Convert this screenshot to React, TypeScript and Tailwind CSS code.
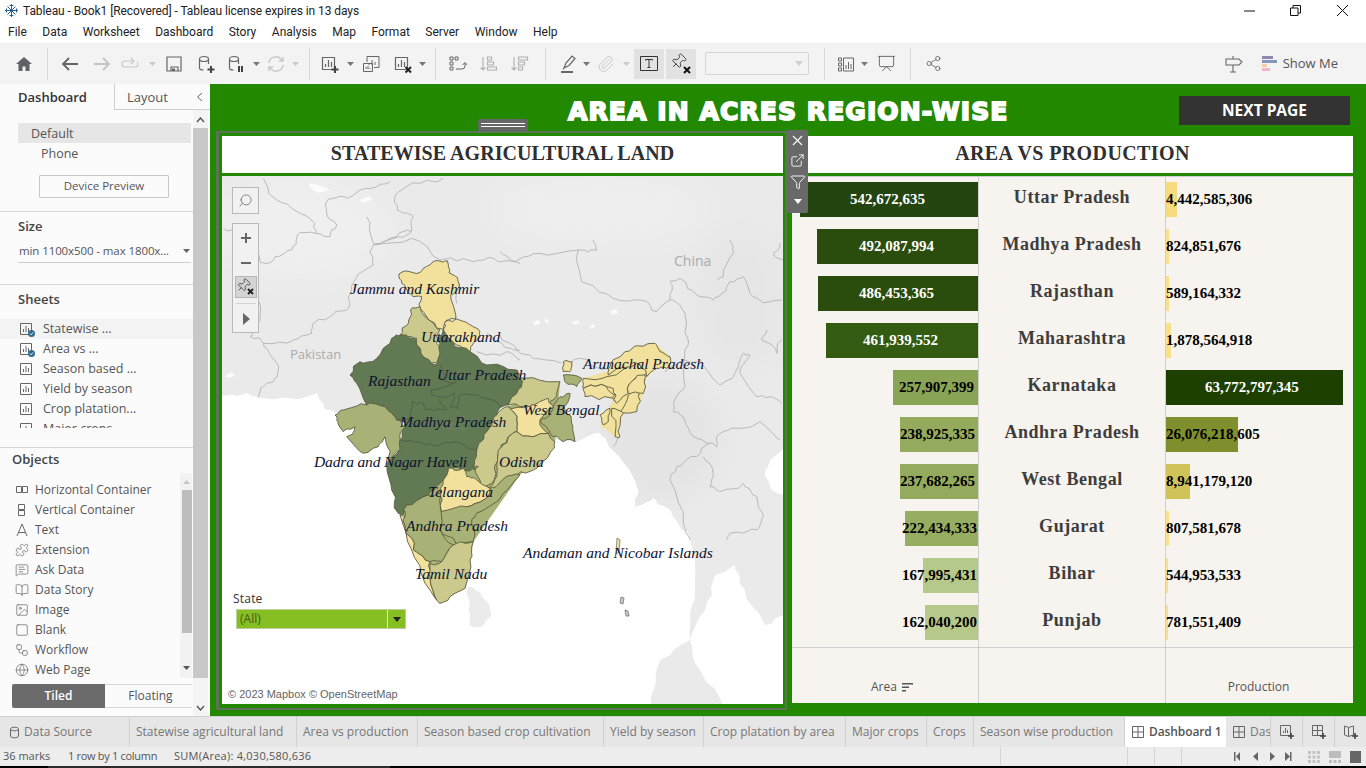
import type { ReactNode } from "react";
import {
  BookOpen,
  ExternalLink,
  Filter,
  Globe,
  Image,
  MessageSquareText,
  Paperclip,
  Pin,
  Presentation,
  Puzzle,
  Search,
  Share2,
  Square,
  Workflow,
  X,
} from "lucide-react";

// map helpers: zoom crops were read at 3x, so convert them back to screen pixels
const z = (ox: number, oy: number, s: string) =>
  s
    .trim()
    .split(/\s+/)
    .map((pair) => {
      const [a, b] = pair.split(",").map(Number);
      return `${(ox + a / 3).toFixed(1)},${(oy + b / 3).toFixed(1)}`;
    })
    .join(" ");
const z6 = (s: string) => z(220, 170, s);
const z7 = (s: string) => z(300, 250, s);
const z8 = (s: string) => z(500, 240, s);

// borders on the map are wiggly, subdivide the edges with a stable offset
const hash = (x: number, y: number) => {
  const s = Math.sin(x * 12.9898 + y * 78.233) * 43758.5453;
  return s - Math.floor(s);
};
const rough = (s: string, closed = false) => {
  let pts = s
    .trim()
    .split(/\s+/)
    .map((p) => p.split(",").map(Number));
  for (let round = 0; round < 2; round++) {
    const next: number[][] = [];
    pts.forEach((a, i) => {
      next.push(a);
      const b = pts[i + 1] ?? (closed ? pts[0] : null);
      if (!b) return;
      const mx = (a[0] + b[0]) / 2;
      const my = (a[1] + b[1]) / 2;
      const amp = Math.min(Math.hypot(a[0] - b[0], a[1] - b[1]) * 0.2, 2.6);
      next.push([mx + (hash(mx, my) - 0.5) * amp * 2, my + (hash(my, mx) - 0.5) * amp * 2]);
    });
    pts = next;
  }
  return pts.map((p) => `${p[0].toFixed(1)},${p[1].toFixed(1)}`).join(" ");
};

const DARK = "#617a53";
const MID = "#a8b277";
const KHAKI = "#cbc98c";
const PALE = "#f1e19d";

const states: [string, string][] = [
  [PALE, z7("297,72 340,68 370,55 415,32 442,32 447,68 472,82 478,108 462,130 452,135 468,205 440,210 430,240 410,235 360,175 365,140 325,130 305,100")],
  [PALE, z7("435,215 470,207 530,235 540,260 520,280 510,305 470,285 430,250 430,240")],
  [KHAKI, z7("335,175 360,170 410,235 420,240 410,280 420,340 395,340 370,320 350,265 325,260 300,255 325,220")],
  [DARK, z7("300,255 345,265 375,325 410,345 418,300 410,270 430,240 465,290 510,305 560,345 650,360 668,395 650,430 625,465 605,470 590,495 560,545 530,600 520,650 535,660 490,660 450,660 420,700 385,735 320,765 310,795 295,790 275,720 260,640 300,600 300,570 315,520 290,510 255,470 200,465 170,400 150,375 180,335 230,325 275,265")],
  [MID, z7("105,495 130,480 200,465 255,470 290,510 315,530 300,570 300,600 265,625 255,560 235,590 190,610 140,560 165,530 130,545 110,510")],
  [KHAKI, z7("650,360 670,385 780,395 770,440 750,460 700,465 680,470 625,465 650,430 668,395")],
  [PALE, z7("625,470 680,470 700,465 745,445 760,470 720,510 745,550 700,560 650,545 650,510")],
  [MID, z7("745,500 780,440 810,430 790,470 815,520 825,575 790,575 750,550 720,510")],
  [MID, z7("790,375 845,385 830,410 795,395")],
  [PALE, z7("790,335 815,335 810,365 790,365")],
  [KHAKI, z7("590,495 625,470 650,510 650,545 625,560 600,600 595,630 585,680 555,710 525,660 535,650 520,650 530,600 560,545")],
  [KHAKI, z7("650,545 700,560 745,550 765,575 750,610 700,660 640,675 600,710 560,715 590,680 595,600 625,560")],
  [PALE, z7("445,655 490,655 500,680 530,690 570,715 550,750 500,770 425,785 420,720 430,690")],
  [MID, z7("570,715 640,675 660,675 610,730 530,790 515,810 520,875 470,885 420,840 420,785 500,770 550,750")],
  [MID, z7("320,765 385,735 425,720 420,840 460,885 425,935 390,935 340,900 315,835 315,800")],
  [PALE, z7("300,795 315,800 315,835 340,900 390,935 390,980 410,1050 375,1000 335,900")],
  [KHAKI, z7("460,885 520,875 510,930 495,1015 450,1040 420,1060 410,1050 390,980 390,940 425,935")],
  [PALE, z8("250,415 320,410 410,370 440,380 440,400 400,420 385,460 350,490 340,480 348,465 320,440 250,445")],
  [PALE, z8("325,405 330,380 350,355 405,318 465,310 480,335 510,350 500,385 470,385 440,410 410,370")],
  [PALE, z8("250,445 320,440 345,465 340,475 255,470")],
  [PALE, z8("400,420 435,405 430,460 385,460")],
  [PALE, z8("385,465 418,460 410,515 360,515")],
  [PALE, z8("335,505 370,520 360,590 345,590")],
  [PALE, z8("300,525 330,505 325,545 310,555")],
];

const innerBorders = [
  z7("420,345 430,390 470,395 390,420 395,435 440,440 465,430 450,470 475,475 475,440 520,435 580,450 605,470"),
  z7("290,510 330,500 335,455 370,460 375,480 440,480 420,445"),
  z7("300,570 340,575 400,585 470,575 530,600"),
];

const countryLines = [
  z6("10,175 35,180 70,210 100,215 120,275 135,280 165,260 215,240 232,195 285,190 330,200 350,165 320,130 320,95 345,85 380,85 420,60 470,50 510,35"),
  z6("130,25 145,70 215,115 285,160 290,190"),
  z6("440,140 460,220 490,215 570,190 580,140 550,130 525,100 530,70 600,40 670,25"),
  z6("575,185 510,205 460,225 450,250 460,285 405,330 385,385 380,420 330,440 280,460 275,490 220,510 130,520 90,500 120,450 100,300"),
  z6("130,520 155,560 175,600 160,635 130,650 115,680"),
  z6("460,225 575,205 660,270 760,275 820,265 900,280"),
  z6("660,270 720,345 710,400"),
  z6("770,545 860,545 900,570"),
  z6("800,490 845,520 900,540"),
  z8("0,285 40,315 60,340 100,355 185,370"),
  z8("215,370 240,355 325,385"),
  z8("0,35 45,65 120,40 235,30 290,30 280,0"),
  z8("235,30 245,125 340,175 420,180 470,215 510,180"),
  z8("510,180 510,125 540,115 590,165 640,180 660,165 690,125 730,110 760,170 780,180 845,180"),
  z8("690,0 700,40 670,110 650,120"),
  z8("840,10 820,40 850,60"),
  z8("510,180 545,205 565,300 555,330 555,440 520,490 520,515 550,530 580,590 630,610 650,620 660,580 720,565 780,545 840,600"),
  z8("630,610 590,650 530,680 510,720 550,850 570,900"),
  z8("610,650 640,700 630,740 660,755 730,730 770,770 790,830 770,870 690,880 680,900"),
  z8("495,395 555,360 600,360 660,435 700,410 730,340 750,345 720,400 770,470 810,470 845,490"),
  z8("800,270 785,300 830,340 845,300"),
  z8("340,620 355,590"),
];

const mapLabels = [
  { text: "Jammu and Kashmir", cls: "left-[128px] top-[104px]" },
  { text: "Uttarakhand", cls: "left-[199px] top-[152px]" },
  { text: "Arunachal Pradesh", cls: "left-[361px] top-[179px]" },
  { text: "Uttar Pradesh", cls: "left-[215px] top-[190px]" },
  { text: "Rajasthan", cls: "left-[146px] top-[196px]" },
  { text: "West Bengal", cls: "left-[301px] top-[225px]" },
  { text: "Madhya Pradesh", cls: "left-[178px] top-[237px]" },
  { text: "Dadra and Nagar Haveli", cls: "left-[92px] top-[277px] tracking-[-0.15px]" },
  { text: "Odisha", cls: "left-[277px] top-[277px]" },
  { text: "Telangana", cls: "left-[206px] top-[307px]" },
  { text: "Andhra Pradesh", cls: "left-[184px] top-[341px]" },
  { text: "Andaman and Nicobar Islands", cls: "left-[301px] top-[368px]" },
  { text: "Tamil Nadu", cls: "left-[193px] top-[389px]" },
];

const rows = [
  { name: "Uttar Pradesh", area: "542,672,635", areaW: 178, areaBg: "#24450f", areaPr: 53, light: true, prod: "4,442,585,306", prodW: 11, prodBg: "#f6dc7f", prodPl: 0 },
  { name: "Madhya Pradesh", area: "492,087,994", areaW: 161, areaBg: "#2a4c0c", areaPr: 44, light: true, prod: "824,851,676", prodW: 3, prodBg: "#f8e08c", prodPl: 0 },
  { name: "Rajasthan", area: "486,453,365", areaW: 160, areaBg: "#2a4c0c", areaPr: 44, light: true, prod: "589,164,332", prodW: 3, prodBg: "#f8e08c", prodPl: 0 },
  { name: "Maharashtra", area: "461,939,552", areaW: 152, areaBg: "#335b11", areaPr: 40, light: true, prod: "1,878,564,918", prodW: 5, prodBg: "#f8e08c", prodPl: 0 },
  { name: "Karnataka", area: "257,907,399", areaW: 85, areaBg: "#8aa455", areaPr: 4, light: false, prod: "63,772,797,345", prodW: 177, prodBg: "#1d3f00", prodPl: 39 },
  { name: "Andhra Pradesh", area: "238,925,335", areaW: 78, areaBg: "#94ab5e", areaPr: 3, light: false, prod: "26,076,218,605", prodW: 72, prodBg: "#808f2e", prodPl: 0 },
  { name: "West Bengal", area: "237,682,265", areaW: 78, areaBg: "#94ab5e", areaPr: 3, light: false, prod: "8,941,179,120", prodW: 24, prodBg: "#cfc35a", prodPl: 0 },
  { name: "Gujarat", area: "222,434,333", areaW: 73, areaBg: "#96ae62", areaPr: 1, light: false, prod: "807,581,678", prodW: 3, prodBg: "#f8e08c", prodPl: 0 },
  { name: "Bihar", area: "167,995,431", areaW: 55, areaBg: "#b5c98a", areaPr: 1, light: false, prod: "544,953,533", prodW: 2, prodBg: "#f8e08c", prodPl: 0 },
  { name: "Punjab", area: "162,040,200", areaW: 53, areaBg: "#b6c98a", areaPr: 1, light: false, prod: "781,551,409", prodW: 2, prodBg: "#f8e08c", prodPl: 0 },
];

const menus = ["File", "Data", "Worksheet", "Dashboard", "Story", "Analysis", "Map", "Format", "Server", "Window", "Help"];
const sheets = ["Statewise ...", "Area vs ...", "Season based ...", "Yield by season", "Crop platation...", "Major crops"];

const sheetTabs = [
  { label: "Statewise agricultural land", cls: "w-[167px]" },
  { label: "Area vs production", cls: "w-[121px]" },
  { label: "Season based crop cultivation", cls: "w-[186px]" },
  { label: "Yield by season", cls: "w-[100px]" },
  { label: "Crop platation by area", cls: "w-[142px]" },
  { label: "Major crops", cls: "w-[81px]" },
  { label: "Crops", cls: "w-[47px]" },
  { label: "Season wise production", cls: "w-[151px]" },
];

const Tool = ({ className, children }: { className: string; children?: ReactNode }) => (
  <div className={`flex items-center justify-center shrink-0 h-full ${className}`}>{children}</div>
);
const Sep = () => <div className="w-px h-[32px] bg-[#d9d9d9] shrink-0" />;
const Caret = ({ light }: { light?: boolean }) => (
  <Tool className="w-[8px]">
    <svg width="7" height="4" viewBox="0 0 7 4">
      <path d="M0 0h7L3.5 4z" fill={light ? "#c8c8c8" : "#777"} />
    </svg>
  </Tool>
);
const Ico = ({ children, size = 20 }: { children: ReactNode; size?: number }) => (
  <svg width={size} height={size} viewBox="0 0 20 20" fill="none" stroke="#666" strokeWidth="1.2">
    {children}
  </svg>
);
const Cylinder = () => <path d="M3.5 5c0-1.4 2-2.5 4.5-2.5s4.500 1.100 4.500 2.500v5M3.500 5c0 1.400 2 2.500 4.500 2.500s4.500-1.100 4.500-2.500M3.500 5v9c0 1 1.500 2 4 2" />;
const Chart = () => <path d="M2.500 3.500h12v12h-12zM5.500 13v-3M8.500 13V6M11.500 13V8" />;
const PlusMark = () => <path d="M15 12v7M11.500 15.500h7" stroke="#444" strokeWidth="2" />;
const XMark = () => <path d="M12.500 13l5.500 5.500M18 13l-5.500 5.500" stroke="#222" strokeWidth="2" />;

const SheetIcon = ({ checked }: { checked?: boolean }) => (
  <span className="relative w-[15px] h-[15px] shrink-0 block">
    <svg width="14" height="14" viewBox="0 0 14 14" fill="none" stroke="#666" strokeWidth="1">
      <path d="M1.500 1.500h11v11h-11zM4.500 10V7M7 10V4M9.500 10V6" />
    </svg>
    {checked && (
      <svg className="absolute left-[9px] top-[8px]" width="7" height="7" viewBox="0 0 7 7">
        <circle cx="3.500" cy="3.500" r="3.500" fill="#2f6a8f" />
        <path d="M1.800 3.600l1.200 1.200 2.200-2.400" stroke="white" strokeWidth="0.9" fill="none" />
      </svg>
    )}
  </span>
);

const objectIcons: [string, ReactNode][] = [
  ["Horizontal Container", <svg width="14" height="14" viewBox="0 0 14 14" fill="none" stroke="#666"><path d="M1.500 3.500h5v6h-5zM7.500 3.500h5v6h-5z" /></svg>],
  ["Vertical Container", <svg width="14" height="14" viewBox="0 0 14 14" fill="none" stroke="#666"><path d="M3.500 1.500h6v5h-6zM3.500 7.500h6v5h-6z" /></svg>],
  ["Text", <svg width="14" height="14" viewBox="0 0 14 14" fill="none" stroke="#666"><path d="M2 13L7 1l5 12M3.500 9.500h7" /></svg>],
  ["Extension", <Puzzle size={14} color="#666" strokeWidth={1.2} />],
  ["Ask Data", <MessageSquareText size={14} color="#666" strokeWidth={1.2} />],
  ["Data Story", <BookOpen size={14} color="#666" strokeWidth={1.2} />],
  ["Image", <Image size={14} color="#666" strokeWidth={1.2} />],
  ["Blank", <Square size={14} color="#666" strokeWidth={1.2} />],
  ["Workflow", <Workflow size={14} color="#666" strokeWidth={1.2} />],
  ["Web Page", <Globe size={14} color="#666" strokeWidth={1.2} />],
];

const Sidebar = () => (
  <aside className="w-[210px] shrink-0 flex flex-col bg-[#fbfbfb] text-[#555] text-[12.5px]">
    <div className="h-[26px] flex shrink-0">
      <div className="w-[114px] pl-[18px] pt-[4px] text-[13px] font-semibold text-[#333]">Dashboard</div>
      <div className="flex-1 flex border-l border-b border-[#cfcfcf] pt-[4px] text-[13px] text-[#555]">
        <span className="pl-[12px]">Layout</span>
        <svg className="ml-[28px] mt-[4px]" width="7" height="10" viewBox="0 0 7 10" fill="none" stroke="#666"><path d="M6 1L1.500 5 6 9" /></svg>
      </div>
    </div>
    <div className="flex h-[606px]">
      <div className="w-[193px] shrink-0 flex flex-col pt-[13px]">
        <div className="ml-[18px] w-[173px] h-[20px] bg-[#e6e6e6] pl-[13px] leading-[22px]">Default</div>
        <div className="h-[20px] pl-[41px] leading-[22px]">Phone</div>
        <div className="mt-[12px] ml-[39px] w-[130px] h-[23px] border border-[#c8c8c8] rounded-[1px] text-center leading-[19px] text-[11.5px]">Device Preview</div>
        <div className="mt-[13px] border-t border-[#d5d5d5] h-[29px] pl-[18px] leading-[28px] font-semibold text-[#444] text-[13px]">Size</div>
        <div className="ml-[18px] w-[173px] h-[23px] border-b border-[#cfcfcf] flex items-center text-[11.5px] tracking-[-0.1px]">
          <span className="pl-px whitespace-nowrap">min 1100x500 - max 1800x...</span>
          <svg className="ml-auto mr-[1px]" width="7" height="4" viewBox="0 0 7 4"><path d="M0 0h7L3.500 4z" fill="#666" /></svg>
        </div>
        <div className="mt-[21px] border-t border-[#d5d5d5] h-[28px] pl-[18px] leading-[28px] font-semibold text-[#444] text-[13px]">Sheets</div>
        <div className="mt-[7px] h-[109px] overflow-hidden">
          {sheets.map((s, i) => (
            <div key={s} className={i === 0 ? "h-[20px] flex items-center pl-[19px] gap-[9px] bg-[#f3f3f3]" : "h-[20px] flex items-center pl-[19px] gap-[9px]"}>
              <SheetIcon checked={i < 2} />
              <span className="whitespace-nowrap">{s}</span>
            </div>
          ))}
        </div>
        <div className="mt-[19px] border-t border-[#d5d5d5] h-[24px] pl-[12px] leading-[22px] font-semibold text-[#444] text-[13px]">Objects</div>
        <div className="flex h-[207px]">
          <div className="w-[180px] pt-[9px]">
            {objectIcons.map(([label, icon]) => (
              <div key={label} className="h-[20px] flex items-center pl-[14px] gap-[6px]">
                <span className="w-[15px] flex justify-center shrink-0">{icon}</span>
                <span className="whitespace-nowrap text-[12px]">{label}</span>
              </div>
            ))}
          </div>
          <div className="mt-[2px] w-[12px] bg-[#f2f2f2] flex flex-col items-center">
            <svg className="mt-[7px] mb-[6px]" width="7" height="4" viewBox="0 0 7 4"><path d="M0 4h7L3.500 0z" fill="#c4c4c4" /></svg>
            <div className="w-[10px] ml-[2px] h-[143px] bg-[#bdbdbd]" />
            <svg className="mt-[33px]" width="7" height="4" viewBox="0 0 7 4"><path d="M0 0h7L3.500 4z" fill="#555" /></svg>
          </div>
        </div>
        <div className="mt-[6px] ml-[12px] h-[24px] flex text-[12px]">
          <div className="w-[93px] bg-[#6b6b6b] text-white font-semibold text-center leading-[24px] rounded-l-[2px]">Tiled</div>
          <div className="w-[87px] border-y border-[#d5d5d5] text-center leading-[22px] pl-[4px]">Floating</div>
        </div>
      </div>
      <div className="w-[15px] flex flex-col items-center bg-[#f4f4f4]">
        <svg className="mt-[7px]" width="9" height="6" viewBox="0 0 9 6" fill="none" stroke="#555" strokeWidth="1.400"><path d="M1 5l3.500-4L8 5" /></svg>
        <div className="mt-[5px] w-[15px] h-[550px] bg-[#c8c8c8]" />
        <svg className="mt-[27px]" width="9" height="6" viewBox="0 0 9 6" fill="none" stroke="#555" strokeWidth="1.400"><path d="M1 1l3.500 4L8 1" /></svg>
      </div>
    </div>
  </aside>
);

const MapPanel = () => (
  <div className="relative w-[561px] h-[528px] bg-white overflow-hidden">
    <svg className="absolute inset-0" width="561" height="528" viewBox="222 176 561 528">
      <defs>
        <filter id="soft" x="-30%" y="-30%" width="160%" height="160%">
          <feGaussianBlur stdDeviation="14" />
        </filter>
        <clipPath id="land">
          <polygon points={rough("215,170 790,170 790,448 770,460 765,475 772,490 790,500 790,610 765,625 745,590 735,565 715,575 705,610 690,640 700,670 725,710 650,710 660,660 690,640 695,580 690,540 680,527 667,508 653,498 635,507 637,487 627,467 610,448 600,433 575,442 335,413 327,410 317,393 307,397 262,398 247,393 215,392", true)} />
        </clipPath>
      </defs>
      <g clipPath="url(#land)">
        <rect x="215" y="170" width="575" height="540" fill="#eaeaea" />
        <ellipse cx="300" cy="230" rx="90" ry="50" fill="#efefef" filter="url(#soft)" />
        <ellipse cx="600" cy="210" rx="110" ry="35" fill="#eeeeee" filter="url(#soft)" />
        <ellipse cx="660" cy="440" rx="60" ry="60" fill="#e4e4e4" filter="url(#soft)" />
        <ellipse cx="740" cy="300" rx="45" ry="70" fill="#e6e6e6" filter="url(#soft)" />
      </g>
      <polygon fill="#ebebeb" points={rough(z(220, 570, "745,50 780,65 810,110 810,140 780,172 750,165 745,120"), true)} />
      {["610,311 616,309 618,313 612,315", "572,322 578,320 580,323 574,325", "533,322 538,320 541,323 535,326", "590,326 594,324 595,327 591,329", "545,320 547,318 549,322 546,323", "308,183 322,186 330,190 318,193 310,188", "360,200 370,196 372,200 362,203", "225,376 232,372 235,376 228,378"].map((p) => (
        <polygon key={p} points={p} fill="#fbfbfb" />
      ))}
      {countryLines.map((p) => (
        <polyline key={p} points={rough(p)} fill="none" stroke="#b0b0b0" strokeWidth="0.85" />
      ))}
      {/* silhouettes so no gaps show between the state shapes */}
      <polygon fill={MID} points={z7("300,600 520,650 625,470 780,395 765,575 660,675 520,875 495,1015 415,1055 310,795")} />
      <polygon fill={PALE} points={z8("250,415 410,370 465,310 510,350 440,410 430,460 410,515 370,520 345,590 300,555 340,480 250,445")} />
      {states.map(([fill, pts]) => (
        <polygon key={pts} points={rough(pts, true)} fill={fill} stroke="#5c5c40" strokeWidth="0.9" strokeLinejoin="round" />
      ))}
      {innerBorders.map((p) => (
        <polyline key={p} points={rough(p)} fill="none" stroke="#4d5f45" strokeWidth="0.9" />
      ))}
      <polygon points="617,538 620,540 619,552 616,554" fill={PALE} stroke="#666" strokeWidth="0.7" />
      <polygon points="621,597 624,598 623,604 620,603" fill="#cccccc" stroke="#666" strokeWidth="0.7" />
      <polygon points="625,610 628,611 629,616 626,616" fill="#cccccc" stroke="#666" strokeWidth="0.7" />
    </svg>

    <span className="absolute left-[68px] top-[169px] text-[13px] text-[#ababab] font-['Open_Sans',sans-serif]">Pakistan</span>
    <span className="absolute left-[452px] top-[74px] text-[14px] text-[#ababab] font-['Open_Sans',sans-serif]">China</span>
    <span className="absolute left-[216px] top-[240px] text-[13px] text-[#6d8060] font-['Open_Sans',sans-serif]">India</span>

    {mapLabels.map((l) => (
      <span key={l.text} className={`absolute ${l.cls} whitespace-nowrap leading-[18px] text-[15.5px] italic text-[#0d1230] font-['Liberation_Serif',serif]`}>
        {l.text}
      </span>
    ))}

    <div className="absolute left-[10px] top-[11px] w-[27px] h-[27px] bg-[#f1f1f1] border border-[#b9b9b9] flex items-center justify-center">
      <Search size={15} color="#666" strokeWidth={1.2} className="-scale-x-100" />
    </div>
    <div className="absolute left-[10px] top-[47px] w-[27px] h-[110px] bg-[#f1f1f1] border border-[#b9b9b9] flex flex-col items-center">
      <svg className="mt-[8px]" width="12" height="12" viewBox="0 0 12 12" fill="none" stroke="#666" strokeWidth="2"><path d="M6 1v10M1 6h10" /></svg>
      <svg className="mt-[13px]" width="12" height="12" viewBox="0 0 12 12" fill="none" stroke="#666" strokeWidth="2"><path d="M1 6h10" /></svg>
      <div className="relative mt-[7px] w-[22px] h-[22px] bg-[#d4d4d4] border border-[#b5b5b5] flex items-center justify-center">
        <Pin size={15} color="#333" strokeWidth={1.2} className="rotate-45 -translate-x-[2px] -translate-y-[2px]" />
        <svg className="absolute right-[2px] bottom-[2px]" width="7" height="7" viewBox="0 0 7 7" stroke="#222" strokeWidth="1.800"><path d="M1 1l5 5M6 1L1 6" /></svg>
      </div>
      <div className="mt-[5px] w-[20px] border-t border-[#d4d4d4]" />
      <svg className="mt-[9px]" width="8" height="12" viewBox="0 0 8 12"><path d="M1 0l7 6-7 6z" fill="#666" /></svg>
    </div>

    <div className="absolute left-[11px] top-[414px] text-[12px] text-[#333] font-['Open_Sans',sans-serif] tracking-[0.2px]">State</div>
    <div className="absolute left-[14px] top-[433px] w-[170px] h-[20px] bg-[#85bf21] border border-[#bdcf9f] flex items-center text-[12px] text-[#46591f] font-['Open_Sans',sans-serif]">
      <span className="pl-[3px] flex-1">(All)</span>
      <span className="w-[18px] h-full border-l border-[#e3eccf] flex items-center justify-center">
        <svg width="8" height="5" viewBox="0 0 8 5"><path d="M0 0h8L4 5z" fill="#222" /></svg>
      </span>
    </div>
    <div className="absolute left-[3px] bottom-[2px] px-[3px] bg-[#ffffffcc] text-[#666] text-[11px] leading-[16px] font-['Liberation_Sans',sans-serif] whitespace-nowrap">
      © 2023 Mapbox © OpenStreetMap
    </div>
  </div>
);

const ChartPanel = () => (
  <div className="ml-[5px] mt-[5px] w-[561px] h-[567px] flex flex-col bg-white shrink-0">
    <div className="h-[37px] flex items-center justify-center pb-[3px] font-['Liberation_Serif',serif] font-bold text-[20px] text-[#2f2f2f] tracking-[0.4px]">AREA VS PRODUCTION</div>
    <div className="h-[3px] bg-[#218800]" />
    <div className="flex-1 flex flex-col bg-[#f7f3ee] border-t border-[#cfcfcf] font-['Liberation_Serif',serif]">
      {rows.map((r) => (
        <div key={r.name} className="flex h-[47px]">
          <div className="w-[187px] border-r border-[#cfcfcf] flex justify-end pt-[5px]">
            <div
              className={`h-[35px] flex items-center justify-end font-bold text-[15px] whitespace-nowrap ${r.light ? "text-white" : "text-black"}`}
              style={{ width: r.areaW, paddingRight: r.areaPr, backgroundColor: r.areaBg }}
            >
              {r.area}
            </div>
          </div>
          <div className="w-[187px] border-r border-[#cfcfcf] text-center pt-[9px] font-bold text-[18px] leading-[22px] text-[#3d3d3d] tracking-[0.55px]">{r.name}</div>
          <div className="flex-1 pt-[5px]">
            <div
              className={`h-[35px] flex items-center font-bold text-[15px] whitespace-nowrap ${r.prodPl ? "text-white" : "text-black"}`}
              style={{ width: r.prodW, paddingLeft: r.prodPl, backgroundColor: r.prodBg }}
            >
              {r.prod}
            </div>
          </div>
        </div>
      ))}
      <div className="flex-1 flex border-t border-[#cfcfcf] font-['Open_Sans',sans-serif] text-[12px] text-[#555]">
        <div className="w-[187px] border-r border-[#cfcfcf] flex items-center pl-[79px] pt-[23px] gap-[5px]">
          <span>Area</span>
          <svg width="11" height="10" viewBox="0 0 11 10" fill="#555"><path d="M0 1h11v1.500H0zM0 4.500h7V6H0zM0 8h4v1.500H0z" /></svg>
        </div>
        <div className="w-[187px] border-r border-[#cfcfcf]" />
        <div className="flex-1 flex items-center justify-center pt-[23px] pr-[2px]">Production</div>
      </div>
    </div>
  </div>
);

const App = () => (
  <div className="w-[1366px] h-[768px] overflow-hidden flex flex-col bg-white font-['Open_Sans',sans-serif]">
    {/* title bar */}
    <div className="h-[21px] shrink-0 flex items-center text-[12px] text-[#222] font-['Roboto',sans-serif] tracking-[-0.08px]">
      <svg className="ml-[5px] mr-[5px]" width="13" height="13" viewBox="0 0 13 13" stroke="#2d5f8c" strokeWidth="1">
        <path d="M6.500 0v13M0 6.500h13M2.500 2.500l8 8M10.500 2.500l-8 8M4.500 1.500h4M4.500 11.500h4M1.500 4.500v4M11.500 4.500v4" />
      </svg>
      <span>Tableau - Book1 [Recovered] - Tableau license expires in 13 days</span>
      <svg className="ml-auto" width="12" height="2" viewBox="0 0 12 2"><path d="M0 1h11" stroke="#111" /></svg>
      <svg className="ml-[34px]" width="11" height="11" viewBox="0 0 11 11" fill="none" stroke="#111"><path d="M.5 3h7.500v7.500H.5zM3 3V.5h7.500V8H8" /></svg>
      <svg className="ml-[35px] mr-[17px]" width="13" height="13" viewBox="0 0 13 13" stroke="#111"><path d="M1 1l11 11M12 1L1 12" /></svg>
    </div>
    {/* menu */}
    <div className="h-[22px] shrink-0 flex items-center gap-[15.5px] pl-[8px] text-[12px] text-[#222] font-['Roboto',sans-serif]">
      {menus.map((m) => (
        <span key={m}>{m}</span>
      ))}
    </div>
    {/* toolbar */}
    <div className="h-[41px] shrink-0 bg-[#f3f3f3] flex items-center">
      <Tool className="w-[47px]"><svg width="20" height="20" viewBox="0 0 20 20"><path d="M10 3l8 7h-2.500v7h-4v-4.500h-3V17h-4v-7H2z" fill="#5f6368" /></svg></Tool>
      <Sep />
      <Tool className="w-[44px]"><Ico><path d="M18 10H3M9 4l-6 6 6 6" strokeWidth="1.800" /></Ico></Tool>
      <Tool className="w-[20px]"><svg width="20" height="20" viewBox="0 0 20 20" fill="none" stroke="#c4c4c4" strokeWidth="1.800"><path d="M2 10h15M11 4l6 6-6 6" /></svg></Tool>
      <Tool className="w-[36px]"><svg width="20" height="20" viewBox="0 0 20 20" fill="none" stroke="#c8c8c8" strokeWidth="1.100"><path d="M13 7H5a3 3 0 0 0 0 6h10a3 3 0 0 0 3-3 3 3 0 0 0-1-2.200M11 4l3 3-3 3" /></svg></Tool>
      <Caret light />
      <Tool className="w-[36px]"><Ico><path d="M3 3h14v14H3z" /><path d="M7 17v-4h7v4" /><path d="M8 14.500h3V17H8z" fill="#666" stroke="none" /></Ico></Tool>
      <Tool className="w-[28px]"><Ico><Cylinder /><PlusMark /></Ico></Tool>
      <Tool className="w-[32px]"><Ico><Cylinder /><path d="M13 12v6M16 12v6" stroke="#444" strokeWidth="2" /></Ico></Tool>
      <Caret />
      <Tool className="w-[31px]"><svg width="20" height="20" viewBox="0 0 20 20" fill="none" stroke="#c8c8c8" strokeWidth="1.400"><path d="M3 9a7 7 0 0 1 12-4l2 2M17 11a7 7 0 0 1-12 4l-2-2M17 3v4h-4M3 17v-4h4" /></svg></Tool>
      <Caret light />
      <Tool className="w-[10px]" />
      <Sep />
      <Tool className="w-[36px] pl-[4px]"><Ico><Chart /><PlusMark /></Ico></Tool>
      <Caret />
      <Tool className="w-[34px]"><Ico><path d="M6 8V2.500h12v11h-5M8 11V9M11 11V6M14 11V8M2.500 9.500h9v8h-9zM5 15v-2M7 15v-3M9 15v-1" strokeWidth="1" /></Ico></Tool>
      <Tool className="w-[30px]"><Ico><Chart /><XMark /></Ico></Tool>
      <Caret />
      <Tool className="w-[9px]" />
      <Sep />
      <Tool className="w-[41px]"><Ico><path d="M3 3h3v3H3zM8 3h3v3H8zM3 8h3v3H3zM3 13h3v3H3zM9 15h6a3 3 0 0 0 3-3V9M15.500 11l2.500-2.500 2 2.500" strokeWidth="1" /></Ico></Tool>
      <Tool className="w-[22px]"><svg width="20" height="20" viewBox="0 0 20 20" fill="none" stroke="#b0b0b0" strokeWidth="1.100"><path d="M5 3v13M2.500 13.500L5 16l2.500-2.500M9.500 3h4v3h-4zM9.500 8h6v3h-6zM9.500 13h9v3h-9z" /></svg></Tool>
      <Tool className="w-[40px]"><svg width="20" height="20" viewBox="0 0 20 20" fill="none" stroke="#b0b0b0" strokeWidth="1.100"><path d="M5 3v13M2.500 13.500L5 16l2.500-2.500M9.500 3h9v3h-9zM9.500 8h6v3h-6zM9.500 13h4v3h-4z" /></svg></Tool>
      <Tool className="w-[6px]" />
      <Sep />
      <Tool className="w-[36px] pl-[8px]"><Ico><path d="M6 14l2-5 6-7 3 2.500-6 7zM6 14l-1 1.500" /><path d="M3 18h12" strokeWidth="2" /></Ico></Tool>
      <Caret />
      <Tool className="w-[32px]"><Paperclip size={18} color="#c4c4c4" strokeWidth={1.2} /></Tool>
      <Caret light />
      <Tool className="w-[4px]" />
      <div className="w-[30px] h-[30px] bg-[#e2e2e2] shrink-0 flex items-center justify-center">
        <svg width="18" height="16" viewBox="0 0 18 16" fill="none" stroke="#333"><path d="M.5.5h17v14H.5zM5.500 4.500v-1h7v1M9 3.500v8M7.500 11.500h3" /></svg>
      </div>
      <div className="relative w-[30px] h-[30px] ml-[2px] bg-[#e2e2e2] shrink-0 flex items-center justify-center">
        <Pin size={17} color="#333" strokeWidth={1.2} className="rotate-45 -translate-x-[3px] -translate-y-[2px]" />
        <svg className="absolute right-[5px] bottom-[5px]" width="8" height="8" viewBox="0 0 8 8" stroke="#111" strokeWidth="2"><path d="M1 1l6 6M7 1L1 7" /></svg>
      </div>
      <div className="ml-[9px] w-[104px] h-[23px] border border-[#d5d5d5] rounded-[2px] bg-[#f3f3f3] flex items-center justify-end pr-[5px] shrink-0">
        <svg width="8" height="5" viewBox="0 0 8 5"><path d="M0 0h8L4 5z" fill="#d0d0d0" /></svg>
      </div>
      <Tool className="w-[15px]" />
      <Sep />
      <Tool className="w-[35px] pl-[7px]"><Ico><path d="M2.500 4h3v3h-3zM2.500 9h3v3h-3zM2.500 14h3v3h-3zM7.500 4h10v13h-10zM10 15v-4M12.500 15V8M15 15v-5" strokeWidth="1" /></Ico></Tool>
      <Caret />
      <Tool className="w-[36px]"><Presentation size={19} color="#666" strokeWidth={1.2} /></Tool>
      <Tool className="w-[6px]" />
      <Sep />
      <Tool className="w-[45px]"><Share2 size={17} color="#666" strokeWidth={1.2} /></Tool>
      <div className="ml-auto flex items-center h-full pr-[28px]">
        <svg width="20" height="20" viewBox="0 0 20 20" fill="none" stroke="#666" strokeWidth="1.100"><path d="M2 5h13l3 3-3 3H2zM9 2v3M9 11v7M6 18h6" /></svg>
        <svg className="ml-[18px]" width="15" height="16" viewBox="0 0 15 16"><path d="M0 0h11v3H0z" fill="#8f88b0" /><path d="M0 4h15v3H0z" fill="#8496be" /><path d="M0 8h5v3H0z" fill="#efcfa6" /><path d="M0 12h8v3H0z" fill="#f3b3c9" /></svg>
        <span className="ml-[6px] text-[13px] text-[#555]">Show Me</span>
      </div>
    </div>
    {/* main */}
    <div className="h-[632px] shrink-0 flex">
      <Sidebar />
      <div className="relative flex-1 bg-[#218800] flex flex-col">
        <div className="h-[47px] shrink-0 relative flex items-start">
          <div className="ml-[358px] mt-[12px] font-['DejaVu_Sans',sans-serif] font-bold text-[25px] leading-[32px] text-white whitespace-nowrap [-webkit-text-stroke:1.8px_white] tracking-[1.1px]">
            AREA IN ACRES REGION-WISE
          </div>
          <div className="ml-auto mr-[16px] mt-[12px] w-[171px] h-[29px] bg-[#333333] text-white font-bold text-[15.5px] flex items-center justify-center">
            NEXT PAGE
          </div>
        </div>
        <div className="flex-1 flex items-start pl-[6px]">
          <div className="relative w-[571px] h-[579px] shrink-0 border-y-2 border-l-[3px] border-r-2 border-[#5d7358] pl-[3px] pr-[2px] pt-[3px]">
            <div className="h-[37px] bg-white flex items-center justify-center pb-[3px] font-['Liberation_Serif',serif] font-bold text-[20px] text-[#2f2f2f] tracking-[0.05px]">STATEWISE AGRICULTURAL LAND</div>
            <div className="h-[3px]" />
            <MapPanel />
            <div className="absolute left-[259px] -top-[14px] w-[50px] h-[12px] bg-[#666] rounded-t-[2px] flex flex-col items-center justify-center gap-[2px]">
              <div className="w-[44px] h-px bg-white" />
              <div className="w-[44px] h-px bg-white" />
            </div>
          </div>
          <ChartPanel />
        </div>
        <div className="absolute left-[577px] top-[46px] w-[21px] h-[83px] bg-[#696969] rounded-[2px] flex flex-col items-center pt-[2px]">
          <X size={17} color="white" strokeWidth={1.6} />
          <ExternalLink size={15} color="white" strokeWidth={1.4} className="mt-[4px]" />
          <Filter size={16} color="white" strokeWidth={1.4} className="mt-[6px]" />
          <svg className="mt-[9px]" width="8" height="5" viewBox="0 0 8 5"><path d="M0 0h8L4 5z" fill="white" /></svg>
        </div>
      </div>
    </div>
    {/* sheet tabs */}
    <div className="h-[31px] shrink-0 bg-[#e6e6e6] border-t border-[#d0d0d0] flex text-[12px] text-[#777]">
      <div className="w-[130px] flex items-center pl-[9px] gap-[4px] border-r border-[#d0d0d0] shrink-0">
        <svg width="11" height="13" viewBox="0 0 11 13" fill="none" stroke="#666"><path d="M1.500 3c0-1 1.700-1.800 4-1.800s4 .8 4 1.800v7c0 1-1.700 1.800-4 1.800s-4-.8-4-1.800zM1.500 3c0 1 1.700 1.800 4 1.800s4-.8 4-1.800" /></svg>
        Data Source
      </div>
      {sheetTabs.map((t) => (
        <div key={t.label} className={`${t.cls} flex items-center pl-[6px] border-r border-[#d0d0d0] shrink-0 whitespace-nowrap overflow-hidden`}>
          {t.label}
        </div>
      ))}
      <div className="w-[101px] bg-white flex items-center pl-[7px] gap-[5px] font-semibold text-[#555] shrink-0 whitespace-nowrap tracking-[-0.1px]">
        <svg width="12" height="12" viewBox="0 0 12 12" fill="none" stroke="#666"><path d="M.5.5h11v11H.5zM6 .5v11M.5 6h11" /></svg>
        Dashboard 1
      </div>
      <div className="w-[44px] flex items-center pl-[7px] gap-[5px] shrink-0 whitespace-nowrap overflow-hidden">
        <svg className="shrink-0" width="12" height="12" viewBox="0 0 12 12" fill="none" stroke="#666"><path d="M.5.5h11v11H.5zM6 .5v11M.5 6h11" /></svg>
        Das
      </div>
      {[0, 1, 2].map((i) => (
        <div key={i} className="flex-1 border-l border-[#d0d0d0] flex items-center justify-center">
          <svg width="16" height="16" viewBox="0 0 16 16" fill="none" stroke="#666">
            {i === 0 && <path d="M1.500 1.500h10v10h-10zM4.500 9V7M6.500 9V4M8.500 9V6" />}
            {i === 1 && <path d="M1.500 1.500h10v10h-10zM6.500 1.500v10M1.500 6.500h10" />}
            {i === 2 && <path d="M1.500 2l4 1.500 5-1.500v9l-5 1.500-4-1.500zM5.500 3.500v9" />}
            <path d="M12 9v6M9 12h6" stroke="#444" strokeWidth="1.600" />
          </svg>
        </div>
      ))}
    </div>
    {/* status bar */}
    <div className="h-[19px] shrink-0 bg-[#ededed] flex items-center text-[11px] text-[#555] whitespace-nowrap">
      <span className="pl-[3px] w-[68px]">36 marks</span>
      <span className="w-[106px] tracking-[-0.3px]">1 row by 1 column</span>
      <span className="w-[826px] tracking-[0.25px]">SUM(Area): 4,030,580,636</span>
      <div className="w-[127px] h-full border-l border-[#d5d5d5]" />
      <div className="w-[27px] h-full border-l border-[#d5d5d5]" />
      <div className="w-[27px] h-full border-l border-[#d5d5d5]" />
      <div className="flex-1 h-full border-l border-[#d5d5d5] flex items-center pl-[52px]">
        <svg width="58" height="9" viewBox="0 0 58 9" fill="#666"><path d="M0 0h1.500v9H0zM6 0v9L2 4.500zM24 0v9l-5-4.500zM36 0l5 4.500-5 4.500zM51 0l5 4.500-5 4.500zM56 0h1.500v9H56z" /></svg>
        <span className="ml-[16px] flex gap-[9px] items-center">
          <svg width="12" height="12" viewBox="0 0 12 12" fill="#c4c4c4"><path d="M0 0h3v3H0zM4.500 0h3v3h-3zM9 0h3v3H9zM0 4.500h3v3H0zM4.500 4.500h3v3h-3zM9 4.500h3v3H9zM0 9h3v3H0zM4.500 9h3v3h-3zM9 9h3v3H9z" /></svg>
          <svg width="12" height="12" viewBox="0 0 12 12" fill="#bdbdbd"><path d="M0 0h12v7H0zM0 9h3v3H0zM4.500 9h3v3h-3zM9 9h3v3H9z" /></svg>
          <svg width="11" height="12" viewBox="0 0 11 12" fill="#666"><path d="M0 0h11v12H0z" /></svg>
        </span>
      </div>
    </div>
    <div className="flex-1 bg-black flex">
      <div className="ml-[48px] w-[342px] bg-[#2b2b2b]" />
    </div>
  </div>
);

export default App;
